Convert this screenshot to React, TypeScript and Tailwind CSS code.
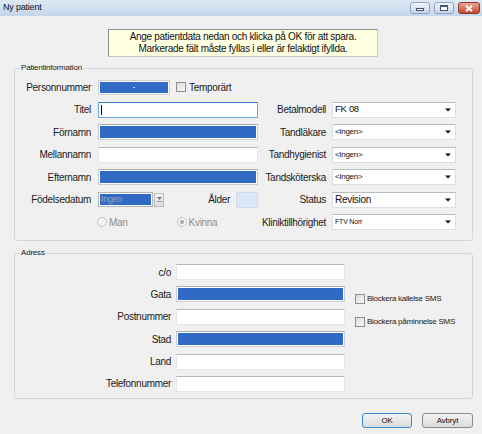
import React from 'react';

const Arrow = () => (
  <svg width="6" height="4" viewBox="0 0 6 4">
    <path d="M0 0.5h6L3 3.5z" fill="#111" />
  </svg>
);

function Label({ children, pr = 'pr-[7px]' }: { children?: React.ReactNode; pr?: string }) {
  return (
    <div className={`flex items-center justify-end whitespace-nowrap text-[10px] tracking-[-0.3px] text-[#1a1a1a] ${pr}`}>
      {children}
    </div>
  );
}

function TextBox({ filled, focused, className = '' }: { filled?: boolean; focused?: boolean; className?: string }) {
  if (filled) {
    return (
      <div className={`h-[16px] border border-[#c9ced6] border-t-[#a9afb8] p-[1px] bg-white ${className}`}>
        <div className="h-full w-full bg-[#316ac5]" />
      </div>
    );
  }
  return (
    <div
      className={`h-[16px] bg-white flex items-center ${
        focused ? 'border border-[#6ea7e0] border-t-[#3d7bc9]' : 'border border-[#e2e6ec] border-t-[#b5bac2]'
      } ${className}`}
    >
      {focused && <div className="ml-[2px] h-[10px] w-[1px] bg-black" />}
    </div>
  );
}

function Combo({ text, size }: { text: string; size: string }) {
  return (
    <div className="h-[16px] bg-white border border-[#dadde2] border-t-[#b9bdc3] flex items-center justify-between pl-[2px] pr-[4px]">
      <span className={`whitespace-nowrap text-[#111] ${size}`}>{text}</span>
      <Arrow />
    </div>
  );
}

function Check() {
  return (
    <div className="w-[10px] h-[10px] border border-[#8e8f8f] bg-gradient-to-br from-[#dcdcdc] to-[#f8f8f8] shrink-0" />
  );
}

function Radio({ checked }: { checked?: boolean }) {
  return (
    <div className="w-[10px] h-[10px] rounded-full border border-[#c3c3c3] bg-[#f4f4f4] flex items-center justify-center shrink-0">
      {checked && <div className="w-[4px] h-[4px] rounded-full bg-[#a8a8a8]" />}
    </div>
  );
}

function Group({ title, className, children }: { title: string; className: string; children: React.ReactNode }) {
  return (
    <div className={`relative ml-[14px] mr-[9px] border border-[#d5d5d5] rounded-[3px] ${className}`}>
      <span className="absolute -top-[6px] left-[5px] px-[1px] bg-[#f0f0f0] text-[8px] leading-[10px] tracking-[-0.2px] text-[#1a1a1a]">
        {title}
      </span>
      {children}
    </div>
  );
}

export default function App() {
  return (
    <div className="w-[482px] h-[434px] overflow-hidden bg-[#f0f0f0] flex flex-col font-['Liberation_Sans',Arial,sans-serif]">
      {/* titelrad */}
      <div className="h-[16px] shrink-0 bg-gradient-to-b from-[#dfe9f5] to-[#c4d6ea] flex items-center justify-between pl-[3px] pr-[2px]">
        <span className="text-[9px] tracking-[-0.2px] text-[#111]">Ny patient</span>
        <div className="flex items-center gap-[4px]">
          <div className="w-[20px] h-[12px] rounded-[3px] border border-[#8da3bf] bg-gradient-to-b from-[#f1f5fa] to-[#c6d5e8] flex items-end justify-center pb-[2px]">
            <div className="w-[8px] h-[3px] border border-[#44546a] bg-white" />
          </div>
          <div className="w-[20px] h-[12px] rounded-[3px] border border-[#8da3bf] bg-gradient-to-b from-[#f1f5fa] to-[#c6d5e8] flex items-center justify-center">
            <div className="w-[8px] h-[6px] border border-[#44546a] border-t-2 bg-white" />
          </div>
          <div className="w-[22px] h-[12px] rounded-[3px] border border-[#8b3b2c] bg-gradient-to-b from-[#e9a596] to-[#c5412a] flex items-center justify-center">
            <svg width="8" height="7" viewBox="0 0 8 7">
              <path d="M1 0.8L7 6.2M7 0.8L1 6.2" stroke="#fff" strokeWidth="2" />
            </svg>
          </div>
        </div>
      </div>

      {/* info */}
      <div className="mt-[13px] ml-[108px] w-[270px] h-[28px] shrink-0 bg-[#ffffe1] border border-[#c8c8c8] border-t-[#8c8c8c] border-l-[#8c8c8c] flex flex-col items-center justify-center text-[10px] leading-[12px] tracking-[-0.3px] text-[#111]">
        <span>Ange patientdata nedan och klicka på OK för att spara.</span>
        <span>Markerade fält måste fyllas i eller är felaktigt ifyllda.</span>
      </div>

      <Group title="Patientinformation" className="mt-[11px] h-[173px] shrink-0">
        <div className="grid grid-cols-[83px_160px_74px_124px] auto-rows-[16px] gap-y-[6.5px] pt-[10px]">
          <Label>Personnummer</Label>
          <div className="flex items-center">
            <div className="w-[72px] h-[15px] border border-[#c9ced6] p-[1px] bg-white">
              <div className="h-full w-full bg-[#316ac5] flex items-center justify-center">
                <div className="w-[2px] h-[1px] bg-[#c8d6ef]" />
              </div>
            </div>
            <div className="ml-[6px]"><Check /></div>
            <span className="ml-[3px] text-[10px] tracking-[-0.3px] text-[#1a1a1a]">Temporärt</span>
          </div>
          <div />
          <div />

          <Label>Titel</Label>
          <TextBox focused />
          <Label pr="pr-[6px]">Betalmodell</Label>
          <Combo text="FK 08" size="text-[9.5px] tracking-[-0.3px]" />

          <Label>Förnamn</Label>
          <TextBox filled />
          <Label pr="pr-[6px]">Tandläkare</Label>
          <Combo text="<Ingen>" size="text-[8px] tracking-[-0.3px]" />

          <Label>Mellannamn</Label>
          <TextBox />
          <Label pr="pr-[6px]">Tandhygienist</Label>
          <Combo text="<Ingen>" size="text-[8px] tracking-[-0.3px]" />

          <Label>Efternamn</Label>
          <TextBox filled />
          <Label pr="pr-[6px]">Tandsköterska</Label>
          <Combo text="<Ingen>" size="text-[8px] tracking-[-0.3px]" />

          <Label>Födelsedatum</Label>
          <div className="flex items-center">
            <div className="w-[55px] h-[15px] border border-[#b0b6bf] p-[1px] bg-white">
              <div className="h-full w-full bg-[#316ac5] flex items-center pl-[1px] text-[9px] tracking-[-0.3px] text-[#9aa4b4]">
                Ingen
              </div>
            </div>
            <div className="w-[10px] h-[14px] ml-[1px] border border-[#b8b8b8] bg-gradient-to-b from-[#f6f6f6] to-[#dedede] flex flex-col items-center justify-center gap-[1px]">
              <svg width="5" height="3" viewBox="0 0 5 3"><path d="M0 0h5L2.5 3z" fill="#777" /></svg>
              <div className="w-[5px] h-[1px] bg-[#999]" />
            </div>
            <span className="ml-auto mr-[6px] text-[10px] tracking-[-0.3px] text-[#1a1a1a]">Ålder</span>
            <div className="w-[22px] h-[16px] border border-[#d0d8e4] bg-[#dbe6f7]" />
          </div>
          <Label pr="pr-[6px]">Status</Label>
          <Combo text="Revision" size="text-[10px] tracking-[-0.3px]" />

          <div />
          <div className="flex items-center text-[10px] tracking-[-0.3px] text-[#8d8d8d]">
            <div className="-ml-[1px]"><Radio /></div>
            <span className="ml-[2px]">Man</span>
            <div className="ml-[49px]"><Radio checked /></div>
            <span className="ml-[2px]">Kvinna</span>
          </div>
          <Label pr="pr-[6px]">Kliniktillhörighet</Label>
          <Combo text="FTV Norr" size="text-[7px] tracking-[-0.2px]" />
        </div>
      </Group>

      <Group title="Adress" className="mt-[12px] h-[146px] shrink-0">
        <div className="grid grid-cols-[161px_169px_10px_auto] auto-rows-[16px] gap-y-[6.4px] pt-[10px]">
          <Label pr="pr-[5px]">c/o</Label>
          <TextBox />
          <div />
          <div />

          <Label pr="pr-[5px]">Gata</Label>
          <TextBox filled />
          <div />
          <div className="flex items-center gap-[2px] pt-[7px] -mb-[3px]">
            <Check />
            <span className="text-[8px] tracking-[-0.25px] text-[#1a1a1a] whitespace-nowrap">Blockera kallelse SMS</span>
          </div>

          <Label pr="pr-[5px]">Postnummer</Label>
          <TextBox />
          <div />
          <div className="flex items-center gap-[2px] pt-[7px] -mb-[3px]">
            <Check />
            <span className="text-[8px] tracking-[-0.25px] text-[#1a1a1a] whitespace-nowrap">Blockera påminnelse SMS</span>
          </div>

          <Label pr="pr-[5px]">Stad</Label>
          <TextBox filled />
          <div />
          <div />

          <Label pr="pr-[5px]">Land</Label>
          <TextBox />
          <div />
          <div />

          <Label pr="pr-[5px]">Telefonnummer</Label>
          <TextBox />
          <div />
          <div />
        </div>
      </Group>

      <div className="mt-[14px] flex justify-end gap-[10px] pr-[9px]">
        <button className="w-[50px] h-[15px] rounded-[3px] border border-[#3c8ad4] bg-gradient-to-b from-[#f2f2f2] to-[#dcdcdc] text-[8px] tracking-[-0.2px] text-[#111] flex items-center justify-center">
          OK
        </button>
        <button className="w-[51px] h-[15px] rounded-[3px] border border-[#8a8a8a] bg-gradient-to-b from-[#f2f2f2] to-[#dcdcdc] text-[8px] tracking-[-0.2px] text-[#111] flex items-center justify-center">
          Avbryt
        </button>
      </div>
    </div>
  );
}
